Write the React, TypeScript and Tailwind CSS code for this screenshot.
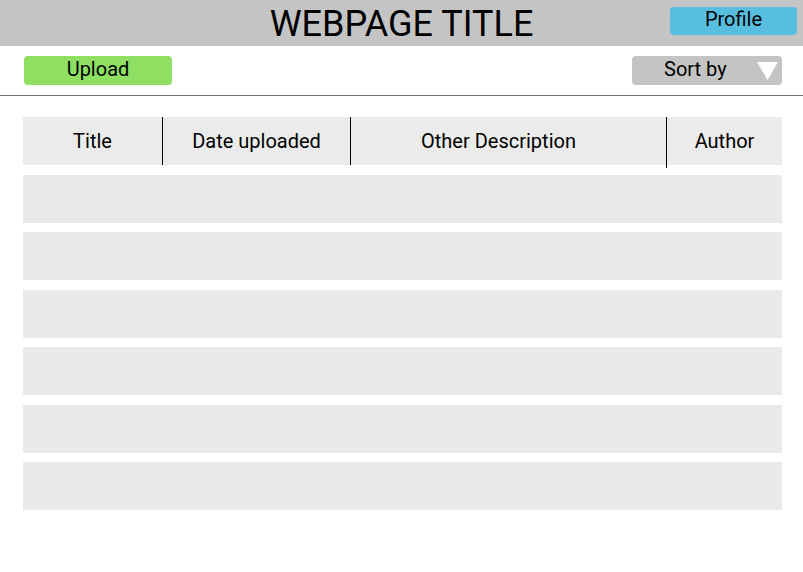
import React from 'react';

const columns = [
  { label: 'Title', width: 'w-[140px]' },
  { label: 'Date uploaded', width: 'w-[188px]' },
  { label: 'Other Description', width: 'w-[316px]' },
  { label: 'Author', width: 'flex-1' },
];

export default function App() {
  const rows = [0, 1, 2, 3, 4, 5];

  return (
    <div className="w-[803px] h-[572px] bg-white text-black font-['Roboto',sans-serif]">
      {/* Top bar */}
      <header className="relative h-[46px] bg-[#c4c4c4] flex items-center justify-center">
        <h1 className="text-[36px] leading-none pt-[1px]">WEBPAGE TITLE</h1>
        <button className="absolute right-[6px] top-[7px] w-[127px] h-[28px] rounded-[4px] bg-[#57bee0] text-[20px] leading-none pb-[4px]">
          Profile
        </button>
      </header>

      {/* Toolbar */}
      <div className="h-[50px] border-b border-[#6e6e6e] flex items-start justify-between pl-[24px] pr-[21px] pt-[10px]">
        <button className="w-[148px] h-[29px] rounded-[4px] bg-[#8fe062] text-[20px] leading-none pb-[3px]">
          Upload
        </button>
        <button className="w-[150px] h-[29px] rounded-[4px] bg-[#c4c4c4] flex items-center justify-between pl-[32px] pr-[4px] text-[20px] leading-none">
          <span className="pb-[3px]">Sort by</span>
          <svg width="21" height="19" viewBox="0 0 21 19">
            <polygon points="0,1 21,1 10.5,19" fill="#ffffff" />
          </svg>
        </button>
      </div>

      {/* Table */}
      <div className="pl-[23px] pr-[21px] pt-[21px] flex flex-col gap-[9.4px]">
        <div className="h-[48px] bg-[#ebebeb] flex text-[20px] mb-[0.6px]">
          {columns.map((c, i) => (
            <div
              key={c.label}
              className={`${c.width} relative flex items-center justify-center ${
                i < columns.length - 1 ? 'border-r border-black' : ''
              } ${i === 2 ? 'pr-[20px]' : ''} ${i === 2 ? 'after:absolute after:right-[-1px] after:top-full after:h-[3px] after:w-[1px] after:bg-black' : ''}`}
            >
              {c.label}
            </div>
          ))}
        </div>
        {rows.map((r) => (
          <div key={r} className="h-[48px] bg-[#eaeaea]" />
        ))}
      </div>
    </div>
  );
}
